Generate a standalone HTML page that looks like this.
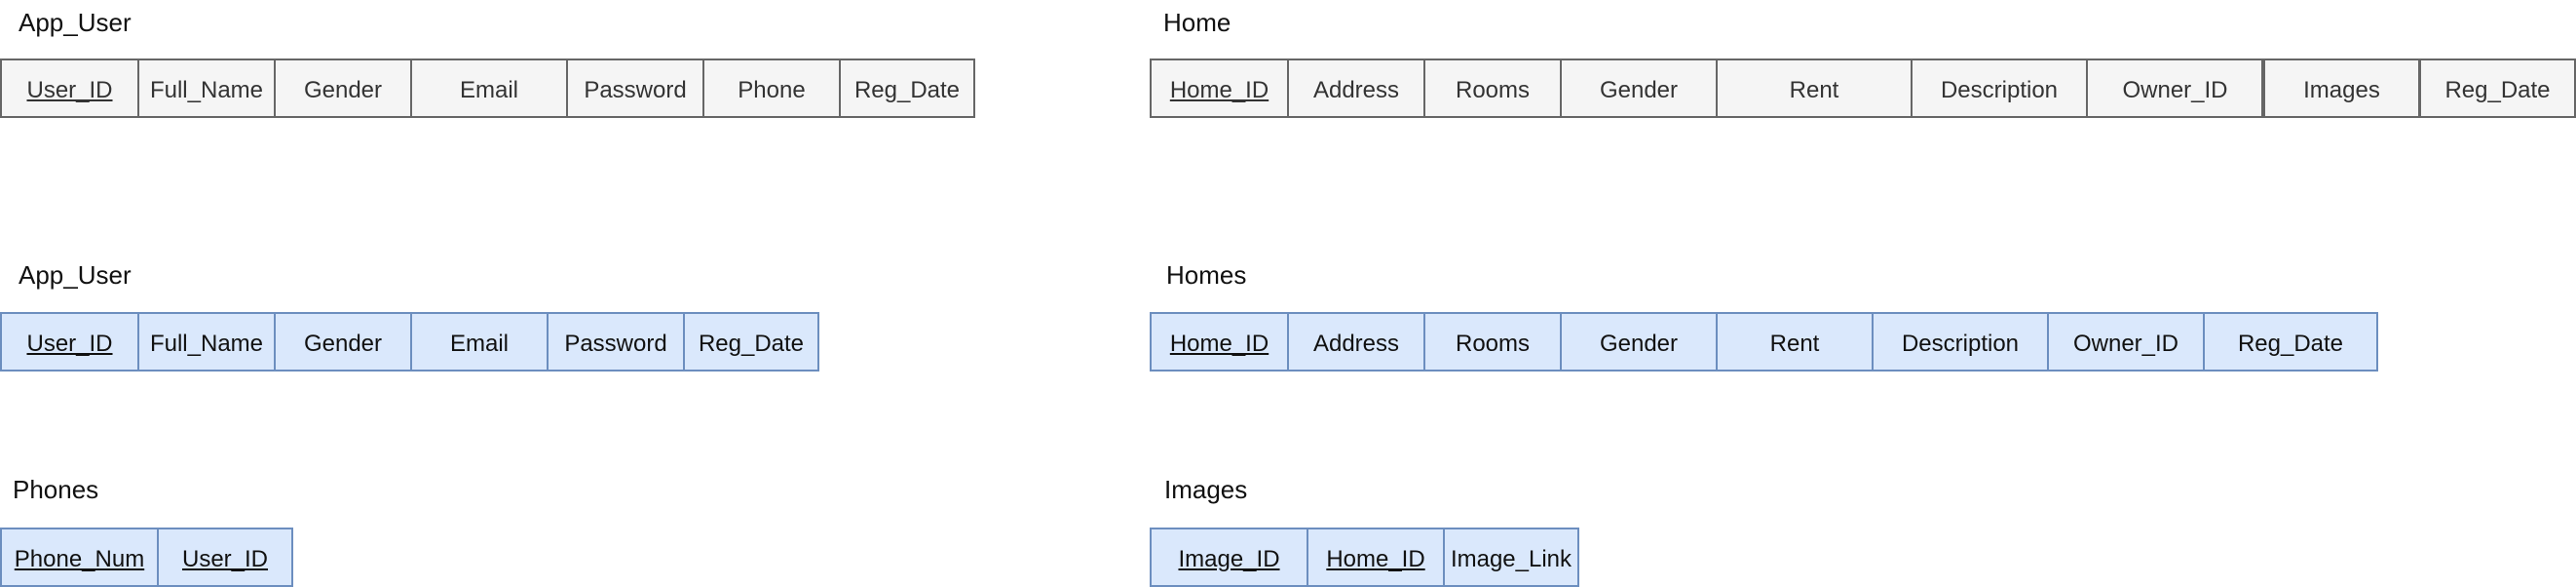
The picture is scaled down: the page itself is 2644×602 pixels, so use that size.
<!DOCTYPE html>
<html><head><meta charset="utf-8"><style>
body{margin:0;width:2644px;height:602px;background:#fff;position:relative;overflow:hidden;font-family:"Liberation Sans",Arial,sans-serif}
.t{position:absolute;font-size:26px;color:#111;line-height:30px}
.row{position:absolute;height:61px}
.c{position:absolute;top:0;height:57px;box-sizing:border-box;border:2px solid;display:flex;align-items:center;justify-content:center;font-size:24px;white-space:nowrap;padding-top:5px}
.g .c{background:#f5f5f5;border-color:#666;color:#333}
.b .c{background:#dae8fc;border-color:#6c8ebf;color:#111}
.u{text-decoration:underline}
</style></head><body>
<div class="t" style="left:19px;top:8px">App_User</div>
<div class="t" style="left:1194px;top:8px">Home</div>
<div class="t" style="left:19px;top:267px">App_User</div>
<div class="t" style="left:1197px;top:267px">Homes</div>
<div class="t" style="left:13px;top:487px">Phones</div>
<div class="t" style="left:1195px;top:487px">Images</div>
<div id="r1" class="row g" style="top:60px;left:0"></div>
<div id="r2" class="row g" style="top:60px;left:0"></div>
<div id="r3" class="row b" style="top:320px;left:0"></div>
<div id="r4" class="row b" style="top:320px;left:0"></div>
<div id="r5" class="row b" style="top:541px;left:0"></div>
<div id="r6" class="row b" style="top:541px;left:0"></div>
<script>
function mk(id,xs,labels,ul){var r=document.getElementById(id);for(var i=0;i<labels.length;i++){var d=document.createElement('div');d.className='c';d.style.left=xs[i]+'px';d.style.width=(xs[i+1]-xs[i]+2)+'px';d.style.height='61px';var s=document.createElement('span');s.textContent=labels[i];if(ul.indexOf(i)>=0)s.className='u';d.appendChild(s);r.appendChild(d);}return r;}
mk('r1',[0,141,281,421,581,721,861,999],['User_ID','Full_Name','Gender','Email','Password','Phone','Reg_Date'],[0]);
var r2=mk('r2',[1180,1321,1461,1601,1761,1961,2141,2322,2483,2642],['Home_ID','Address','Rooms','Gender','Rent','Description','Owner_ID','Images','Reg_Date'],[0]);
r2.children[7].style.borderLeftWidth='4px';r2.children[7].style.left='2321px';
mk('r3',[0,141,281,421,561,701,839],['User_ID','Full_Name','Gender','Email','Password','Reg_Date'],[0]);
mk('r4',[1180,1321,1461,1601,1761,1921,2101,2261,2439],['Home_ID','Address','Rooms','Gender','Rent','Description','Owner_ID','Reg_Date'],[0]);
mk('r5',[0,161,299],['Phone_Num','User_ID'],[0,1]);
mk('r6',[1180,1341,1481,1619],['Image_ID','Home_ID','Image_Link'],[0,1]);
</script>
</body></html>
